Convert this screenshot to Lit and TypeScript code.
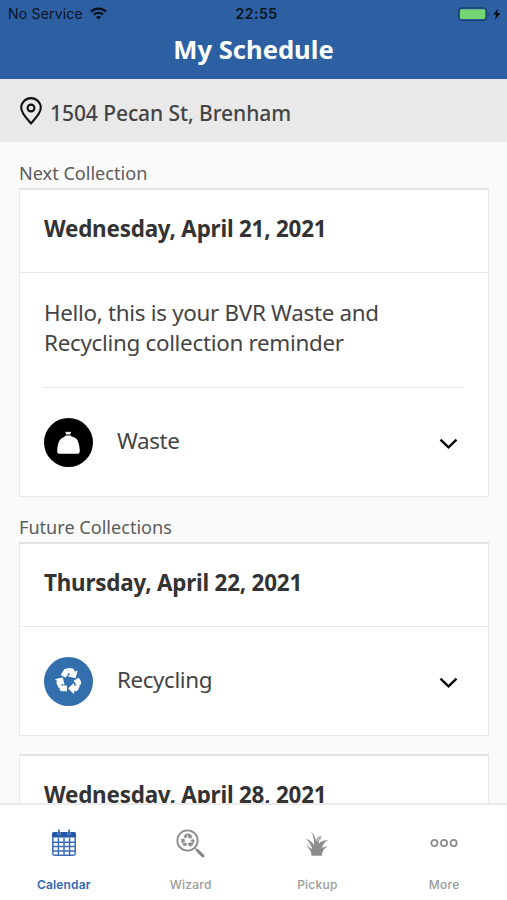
import { LitElement, html, svg, css } from "lit";
import { customElement, property } from "lit/decorators.js";

const recycle = svg`<path d="M5.77,7.15L7.2,4.78l1.03-1.71c0.39-0.65,1.33-0.65,1.72,0l1.48,2.46l-1.23,2.06l-1,1.62L5.77,7.15z M21.72,12.97l-1.6-2.66l-3.46,2L18.87,16H20c0.76,0,1.45-0.43,1.79-1.11C21.93,14.61,22,14.31,22,14C22,13.64,21.9,13.29,21.72,12.97z M16,21h1.5c0.76,0,1.45-0.43,1.79-1.11L20.74,17H16v-2l-4,4l4,4V21z M10,17H5.7l-0.84,1.41c-0.3,0.5-0.32,1.12-0.06,1.65l0,0C5.08,20.63,5.67,21,6.32,21H10V17z M6.12,14.35l1.73,1.04L6.48,9.9L1,11.27l1.7,1.02l-0.41,0.69c-0.35,0.59-0.38,1.31-0.07,1.92l1.63,3.26L6.12,14.35z M17.02,5.14l-1.3-2.17C15.35,2.37,14.7,2,14,2h-3.53l3.12,5.2l-1.72,1.03l5.49,1.37l1.37-5.49L17.02,5.14z"/>`;

const serviceIcons: Record<string, unknown> = {
  Waste: html`<svg width="49" height="49" viewBox="0 0 49 49">
    <circle cx="24.5" cy="24.5" r="24.5" fill="#000" />
    <path fill="#fff" d="M21.2 13.4 23 14.2 24.2 13.5 25.4 14.2 27.2 13.4 26.2 16.6H22.2Z" />
    <path fill="#fff" d="M22 17.6H26.4C28 19 30.6 19.4 32.4 20.8C34.6 22.8 35.6 29 35.8 32.4C35.8 34.6 35 35.8 33.2 35.8H15.6C13.8 35.8 13.1 34.6 13.2 32.4C13.4 28 14 25 15.6 22.4C17 20.2 20.6 19.2 22 17.6Z" />
  </svg>`,
  Recycling: html`<svg width="49" height="49" viewBox="0 0 49 49">
    <circle cx="24.5" cy="24.5" r="24.5" fill="#336fad" />
    <g fill="#fff" stroke="#fff" stroke-width="0.9" stroke-linejoin="round" transform="translate(10.6 9.4) scale(1.19 1.16)">${recycle}</g>
  </svg>`,
};

@customElement("status-bar")
class StatusBar extends LitElement {
  static styles = css`
    :host { display: grid; grid-template-columns: 1fr auto 1fr; align-items: center; height: 27px;
      padding: 0 6px 0 8px; color: #0a1424; font: 14px/27px Inter, sans-serif; }
    .left { display: flex; align-items: center; gap: 7px; }
    .carrier { font-size: 14px; letter-spacing: 0.2px; }
    .time { font-weight: 600; font-size: 14px; letter-spacing: 0.5px; padding-left: 4px; }
    .right { display: flex; justify-content: flex-end; }
    svg { display: block; }
  `;
  render() {
    return html`
      <div class="left"><span class="carrier">No Service</span>
        <svg width="17" height="13" viewBox="0 0 17 13" fill="none" stroke="#08111f" stroke-width="2.4">
          <path d="M1 4.6C5.2 0.6 11.8 0.6 16 4.6" />
          <path d="M3.9 7.7C6.5 5.3 10.5 5.3 13.1 7.7" />
          <path d="M8.5 12.6 5.9 10C7.4 8.8 9.6 8.8 11.1 10Z" fill="#08111f" stroke="none" />
        </svg></div>
      <span class="time">22:55</span>
      <div class="right">
        <svg width="43" height="14" viewBox="0 0 43 14">
          <rect x="0.6" y="0.9" width="28" height="12.4" rx="3" fill="none" stroke="#17406f" stroke-width="1.2" />
          <rect x="2" y="2.2" width="25.2" height="9.8" rx="1.4" fill="#76d572" />
          <path d="M30.3 5.2C31.6 5.6 31.6 8.8 30.3 9.2Z" fill="#17406f" />
          <path d="M40.2 1.4 35 7.7H38.2L37 12.8 42.4 6.2H39.2Z" fill="#050b14" />
        </svg>
      </div>`;
  }
}

@customElement("collection-card")
class CollectionCard extends LitElement {
  @property() date = "";
  @property() message = "";
  @property() service = "";
  static styles = css`
    :host { display: block; box-sizing: border-box; background: #fff; border: 1px solid #e9e9e9;
      border-top: 2px solid #e2e2e2; margin: 0 18px 0 19px; color: #333; }
    .date { height: 83px; box-sizing: border-box; padding: 23px 24px 0; font-weight: 700;
      font-size: 22.4px; letter-spacing: -0.2px; line-height: 32px; border-bottom: 1px solid #e9e9e9; white-space: nowrap; }
    .message { margin: 0 24px; padding: 25px 0 29px; border-bottom: 1px solid #e6e6e6;
      font-size: 22.4px; letter-spacing: -0.3px; line-height: 30px; color: #444; }
    .row { display: flex; align-items: center; height: 108px; padding: 0 30px 0 24px; }
    .name { flex: 1; margin-left: 24px; font-size: 22.4px; letter-spacing: -0.4px; line-height: 30px; padding-bottom: 2px; color: #444; }
    svg { display: block; }
    .chevron { margin-top: 2px; }
  `;
  render() {
    return html`
      <div class="date">${this.date}</div>
      ${this.message ? html`<div class="message">${this.message}</div>` : ""}
      ${this.service
        ? html`<div class="row">${serviceIcons[this.service]}
            <span class="name">${this.service}</span>
            <svg class="chevron" width="20" height="14" viewBox="0 0 20 14"><path d="M2.5 3.6 10.5 11.4 18.5 3.6" fill="none" stroke="#0a0a0a" stroke-width="2.4" /></svg>
          </div>`
        : ""}`;
  }
}

const calendarIcon = html`<svg width="24" height="28" viewBox="0 0 24 28">
  <path d="M1.5 3H22.5Q24 3 24 4.5V8.6H0V4.5Q0 3 1.5 3Z" fill="#2458a8" />
  <g fill="none" stroke="#3c6db8" stroke-width="1.5">
    <path d="M0.8 8V24.6Q0.8 26.2 2.4 26.2H21.6Q23.2 26.2 23.2 24.6V8" />
    <path d="M6.4 9V26M12 9V26M17.6 9V26M1 13.2H23M1 17.6H23M1 22H23" />
  </g>
  <path d="M7 0.4V6M17 0.4V6" stroke="#a9c0e2" stroke-width="3" />
  <path d="M7 0.4V6M17 0.4V6" stroke="#2458a8" stroke-width="1.5" />
  <path d="M4.8 0H9.2V3H4.8ZM14.8 0H19.2V3H14.8Z" fill="#fff" />
  <path d="M7 0.4V4M17 0.4V4" stroke="#2458a8" stroke-width="1.5" />
</svg>`;

const wizardIcon = html`<svg width="29" height="29" viewBox="0 0 29 29">
  <circle cx="11.5" cy="11.5" r="10.2" fill="none" stroke="#8c8c8c" stroke-width="1.8" />
  <g fill="#8c8c8c" stroke="#8c8c8c" stroke-width="0.5" transform="translate(4 3.4) scale(.65 .63)">${recycle}</g>
  <path d="M19 19 21.4 21.4" stroke="#8c8c8c" stroke-width="1.2" />
  <path d="M21.6 21.6 27 27" stroke="#858585" stroke-width="3" stroke-linecap="round" />
</svg>`;

const grassIcon = html`<svg width="24" height="25" viewBox="0 0 24 25">
  <g fill="#8b8b8b">
    <path d="M6.6 24.5C6.4 21 5.2 18.4 1.8 16C5 16.6 6.6 17.6 7.6 19.2C7 15 5 11 0.6 7.6C5.4 9.6 8 12 9.2 14.6C9.4 9 8.6 4.4 5.6 0.4C9.2 3.2 10.6 6.4 11 10.4C11.4 7.4 13 5.2 16.4 5C14.2 7.2 13.8 9.8 13.8 13C15.2 10.8 18 9.2 23.6 9C19.4 10.8 17.6 13.4 17.2 17.4C18.6 16 20.2 15.4 22.6 15.8C19.4 17 17.2 20 16.8 24.5Z" />
    <path d="M6.6 24.5V17L10 12.5H14.4L17.4 16.5 16.8 24.5Z" />
  </g>
  <path d="M11.6 10.6C11.6 7 13.4 5 16.6 4.8C16.6 7.6 15.2 9.6 12.6 11Z" fill="#b4b4b4" />
  <path d="M3 11.4 7 16.4M1.6 13.6 6 18M19.6 11 16.4 17" stroke="#a8a8a8" stroke-width="0.8" fill="none" />
</svg>`;

const moreIcon = html`<svg width="28" height="10" viewBox="0 0 28 10" fill="none" stroke="#8c8c8c" stroke-width="1.8">
  <circle cx="4.4" cy="5" r="3.1" /><circle cx="14" cy="5" r="3.1" /><circle cx="23.6" cy="5" r="3.1" />
</svg>`;

@customElement("tab-bar")
class TabBar extends LitElement {
  static styles = css`
    :host { display: grid; grid-template-columns: repeat(4, 1fr); height: 97px; box-sizing: border-box;
      background: #fff; border-top: 2px solid #ebebeb; font: 500 12px/16px Inter, sans-serif; }
    .tab { display: flex; flex-direction: column; align-items: center; color: #9a9a9a; letter-spacing: 0.25px; padding-left: 1px; }
    .icon { display: flex; height: 32px; margin: 22px 0 18px; align-items: center; }
    .active { color: #3468b5; font-weight: 600; letter-spacing: 0.15px; }
    svg { display: block; }
  `;
  tabs = [
    ["Calendar", calendarIcon],
    ["Wizard", wizardIcon],
    ["Pickup", grassIcon],
    ["More", moreIcon],
  ];
  render() {
    return this.tabs.map(
      ([label, icon], i) => html`<div class="tab ${i === 0 ? "active" : ""}">
        <div class="icon">${icon}</div><span>${label}</span></div>`
    );
  }
}

@customElement("app-root")
class AppRoot extends LitElement {
  static styles = css`
    :host { display: flex; flex-direction: column; height: 900px; overflow: hidden; background: #fafafa;
      font-family: "Noto Sans", sans-serif; }
    header { background: #2d60a3; height: 79px; flex: none; }
    h1 { margin: 5px 0 0; text-align: center; color: #fff; font-size: 25.6px; line-height: 36px; font-weight: 700; }
    .address { display: flex; align-items: center; gap: 8px; height: 63px; flex: none; padding: 0 20px;
      background: #e9e9e9; color: #444; font-size: 21px; letter-spacing: -0.07px; font-weight: 500; }
    .address span { padding-top: 5px; }
    .list { flex: 1; min-height: 0; overflow: hidden; }
    .label { margin: 19px 19px 3px; height: 24px; font-size: 18.1px; line-height: 24px; color: #5c5c5c; }
    .label.future { margin-top: 18px; }
    .gap { margin-top: 18px; }
    tab-bar { flex: none; }
  `;
  render() {
    return html`
      <header><status-bar></status-bar><h1>My Schedule</h1></header>
      <div class="address">
        <svg width="22" height="28" viewBox="0 0 22 28" fill="none" stroke="#111" stroke-width="2.1">
          <path d="M11 26.4C7 21.6 1.2 16.6 1.2 10.8A9.8 9.7 0 0 1 20.8 10.8C20.8 16.6 15 21.6 11 26.4Z" />
          <circle cx="11" cy="11" r="3.4" />
        </svg>
        <span>1504 Pecan St, Brenham</span>
      </div>
      <div class="list">
        <div class="label">Next Collection</div>
        <collection-card date="Wednesday, April 21, 2021" service="Waste"
          message="Hello, this is your BVR Waste and Recycling collection reminder"></collection-card>
        <div class="label future">Future Collections</div>
        <collection-card date="Thursday, April 22, 2021" service="Recycling"></collection-card>
        <collection-card class="gap" date="Wednesday, April 28, 2021" service="Waste"></collection-card>
      </div>
      <tab-bar></tab-bar>`;
  }
}
